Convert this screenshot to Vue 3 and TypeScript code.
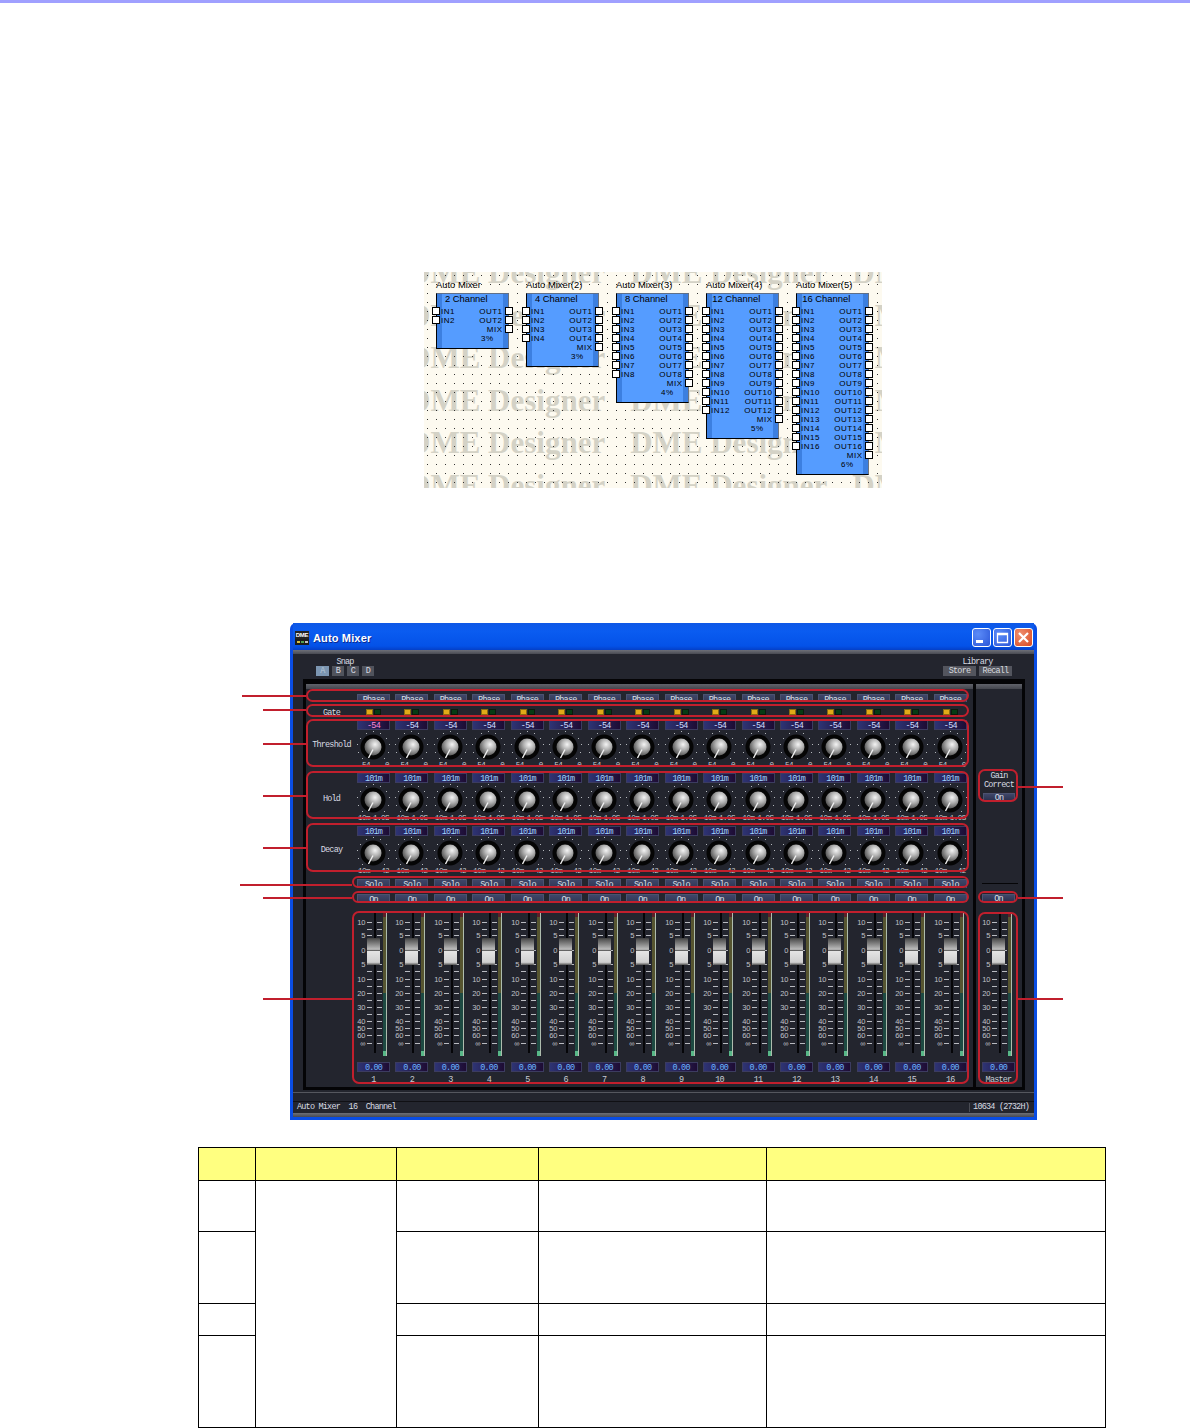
<template>
  <div class="page">
    <div class="topbar" />

    <section class="canvas">
      <svg class="dots" width="458" height="216">
        <defs>
          <pattern id="dotgrid" x="3" y="3" width="9" height="9" patternUnits="userSpaceOnUse">
            <rect width="1" height="1" fill="#333" />
          </pattern>
        </defs>
        <rect width="458" height="216" fill="url(#dotgrid)" />
      </svg>
      <div class="watermark">
        <div v-for="r in 6" :key="r" class="wm-row">
          <span>DME Designer</span><span>DME Designer</span><span>DME Designer</span>
        </div>
      </div>
      <div class="blocks">
        <div v-for="b in blocks" :key="b.name" class="block-wrap">
          <div class="block-name">{{ b.name }}</div>
          <div class="block">
            <div class="block-title">{{ b.channels }} Channel</div>
            <div v-for="i in b.channels" :key="i" class="port-row">
              <i class="port port--in" />
              <span class="port-in">IN{{ i }}</span>
              <span class="port-out">OUT{{ i }}</span>
              <i class="port port--out" />
            </div>
            <div class="port-row">
              <span class="port-out">MIX</span>
              <i class="port port--out" />
            </div>
            <div class="port-row port-row--load">{{ b.load }}</div>
          </div>
        </div>
      </div>
    </section>

    <div class="mixer-wrap">
      <div class="win">
        <div class="titlebar">
          <div class="app-icon">
            <span>DME</span>
            <svg width="14" height="6">
              <rect width="14" height="6" fill="#1c1c1c" />
              <rect x="2" y="2" width="3" height="2" fill="#d8c040" />
              <rect x="6" y="2" width="3" height="2" fill="#50a050" />
              <rect x="10" y="2" width="3" height="2" fill="#c0c0c0" />
            </svg>
          </div>
          <span class="win-title">Auto Mixer</span>
          <div class="win-btns">
            <button class="win-btn">
              <svg width="17" height="17"><rect x="3" y="11" width="7" height="3" fill="#fff" /></svg>
            </button>
            <button class="win-btn">
              <svg width="17" height="17"><path d="M3.5 4.5h10v9h-10zM3.5 5.5h10" fill="none" stroke="#fff" stroke-width="1.3" /></svg>
            </button>
            <button class="win-btn win-btn--close">
              <svg width="17" height="17"><path d="M4 4l9 9M13 4l-9 9" stroke="#fff" stroke-width="2.2" /></svg>
            </button>
          </div>
        </div>

        <div class="win-body">
          <div class="grey-strip" />
          <div class="win-head">
            <div class="snap">
              <div class="head-label">Snap</div>
              <div class="snap-btns">
                <span v-for="s in ['A', 'B', 'C', 'D']" :key="s" class="snap-btn" :class="{ 'snap-btn--on': s === 'A' }">{{ s }}</span>
              </div>
            </div>
            <div class="library">
              <div class="head-label">Library</div>
              <div class="lib-btns">
                <span class="lib-btn">Store</span>
                <span class="lib-btn">Recall</span>
              </div>
            </div>
          </div>

          <div class="panel">
            <div class="main-panel">
              <div class="panel-strip" />

              <div class="row row--phase">
                <span class="row-label" />
                <div class="strips">
                  <span v-for="n in 16" :key="n" class="btn btn--clip">Phase</span>
                </div>
              </div>

              <div class="row row--gate">
                <span class="row-label">Gate</span>
                <div class="strips">
                  <div v-for="n in 16" :key="n" class="leds"><i class="led led--y" /><i class="led led--g" /></div>
                </div>
              </div>

              <div v-for="k in knobRows" :key="k.label" class="row row--knob">
                <span class="row-label row-label--knob" :style="{ paddingTop: k.labelTop + 'px' }">{{ k.label }}</span>
                <div class="strips">
                  <div v-for="n in 16" :key="n" class="knob-cell">
                    <div class="val" :class="{ 'val--pink': k.pink && n === 1, 'val--pale': k.pink && n > 1 }">{{ k.value }}</div>
                    <svg class="knob" width="33" height="34" viewBox="0 0 33 34">
                      <rect v-for="(d, i) in knobDots" :key="i" :x="d.x" :y="d.y" width="1" height="1" fill="#b4b8bc" />
                      <circle cx="16" cy="17" r="12.5" fill="#050505" />
                      <circle cx="16" cy="17" r="8.5" fill="url(#ball)" />
                      <path d="M16 19.5L11.5 28" stroke="#f0f0f0" stroke-width="1.4" />
                    </svg>
                    <div class="range"><span>{{ k.min }}</span><span>{{ k.max }}</span></div>
                  </div>
                </div>
              </div>

              <div class="row row--solo">
                <span class="row-label" />
                <div class="strips">
                  <span v-for="n in 16" :key="n" class="btn btn--solo">Solo</span>
                </div>
              </div>

              <div class="row row--on">
                <span class="row-label" />
                <div class="strips">
                  <span v-for="n in 16" :key="n" class="btn btn--clip">On</span>
                </div>
              </div>

              <div class="row row--fader">
                <span class="row-label" />
                <div class="strips">
                  <div v-for="n in 16" :key="n" class="fader-cell">
                    <svg class="fader" width="33" height="143" viewBox="0 0 33 143">
                      <rect x="17" y="0" width="2" height="140" fill="#050508" />
                      <g v-for="t in ticks" :key="t.y">
                        <text x="8.5" :y="t.y + 2.5" text-anchor="end" class="tick-text">{{ t.label }}</text>
                        <rect x="10" :y="t.y" width="5" height="1" fill="#b8bac0" />
                        <rect x="20" :y="t.y" width="5" height="1" fill="#b8bac0" />
                      </g>
                      <rect x="26" y="0" width="3" height="4" fill="#5a2028" />
                      <rect x="26" y="4" width="3" height="76" fill="#565530" />
                      <rect x="26" y="80" width="3" height="58" fill="#1d4a42" />
                      <rect x="26" y="138" width="3" height="5" fill="#58b888" />
                      <rect x="29" y="0" width="1" height="143" fill="#aebcae" />
                      <rect x="10" y="25" width="13" height="27" rx="1" fill="url(#cap)" />
                    </svg>
                    <div class="val val--fader">0.00</div>
                    <div class="strip-no">{{ n }}</div>
                  </div>
                </div>
              </div>
            </div>

            <div class="master">
              <div class="panel-strip" />
              <div class="gain">
                <div class="gain-label">Gain</div>
                <div class="gain-label">Correct</div>
                <span class="btn btn--gain">On</span>
              </div>
              <div class="master-line" />
              <span class="btn btn--master-on">On</span>
              <div class="fader-cell fader-cell--master">
                <svg class="fader" width="33" height="143" viewBox="0 0 33 143">
                  <rect x="17" y="0" width="2" height="140" fill="#050508" />
                  <g v-for="t in ticks" :key="t.y">
                    <text x="8.5" :y="t.y + 2.5" text-anchor="end" class="tick-text">{{ t.label }}</text>
                    <rect x="10" :y="t.y" width="5" height="1" fill="#b8bac0" />
                    <rect x="20" :y="t.y" width="5" height="1" fill="#b8bac0" />
                  </g>
                  <rect x="26" y="0" width="3" height="4" fill="#5a2028" />
                  <rect x="26" y="4" width="3" height="76" fill="#565530" />
                  <rect x="26" y="80" width="3" height="58" fill="#1d4a42" />
                  <rect x="26" y="138" width="3" height="5" fill="#58b888" />
                  <rect x="29" y="0" width="1" height="143" fill="#aebcae" />
                  <rect x="10" y="25" width="13" height="27" rx="1" fill="url(#cap)" />
                </svg>
                <div class="val val--fader">0.00</div>
                <div class="strip-no">Master</div>
              </div>
            </div>
          </div>

          <div class="under-line" />
          <div class="statusbar">
            <span class="status-left">{{ statusText }}</span>
            <span class="status-right">10634 (2732H)</span>
          </div>
          <div class="grey-strip grey-strip--bottom" />
        </div>
      </div>

      <!-- red annotations sit over the screenshot -->
      <div v-for="(b, i) in redBoxes" :key="'b' + i" class="red-box" :style="boxStyle(b)" />
      <div v-for="(l, i) in redLines" :key="'l' + i" class="red-line" :style="lineStyle(l)" />
    </div>

    <table class="spec">
      <colgroup>
        <col style="width: 57px" /><col style="width: 141px" /><col style="width: 142px" /><col style="width: 228px" /><col style="width: 339px" />
      </colgroup>
      <tbody>
        <tr class="spec-head"><td /><td /><td /><td /><td /></tr>
        <tr class="r1"><td /><td rowspan="4" /><td /><td /><td /></tr>
        <tr class="r2"><td /><td /><td /><td /></tr>
        <tr class="r3"><td /><td /><td /><td /></tr>
        <tr class="r4"><td /><td /><td /><td /></tr>
      </tbody>
    </table>

    <svg class="defs" width="0" height="0">
      <defs>
        <radialGradient id="ball" cx="0.62" cy="0.35" r="0.75">
          <stop offset="0" stop-color="#f4f4f4" />
          <stop offset="0.4" stop-color="#b4b4b4" />
          <stop offset="0.85" stop-color="#5c5c5c" />
          <stop offset="1" stop-color="#343434" />
        </radialGradient>
        <linearGradient id="cap" x1="0" y1="0" x2="0" y2="1">
          <stop offset="0" stop-color="#3e3e3e" />
          <stop offset="0.08" stop-color="#5c5c5c" />
          <stop offset="0.42" stop-color="#bdbdbd" />
          <stop offset="0.46" stop-color="#5a5a5a" />
          <stop offset="0.5" stop-color="#e4e4e4" />
          <stop offset="0.9" stop-color="#cfcfcf" />
          <stop offset="1" stop-color="#505050" />
        </linearGradient>
      </defs>
    </svg>
  </div>
</template>

<script setup lang="ts">
type Box = [number, number, number, number];

const WRAP_TOP = 623;
const statusText = 'Auto Mixer  16  Channel';

const blocks = [
  { name: 'Auto Mixer', channels: 2, load: '3%' },
  { name: 'Auto Mixer(2)', channels: 4, load: '3%' },
  { name: 'Auto Mixer(3)', channels: 8, load: '4%' },
  { name: 'Auto Mixer(4)', channels: 12, load: '5%' },
  { name: 'Auto Mixer(5)', channels: 16, load: '6%' },
];

const knobRows = [
  { label: 'Threshold', value: '-54', min: '-54', max: '0', pink: true, labelTop: 21 },
  { label: 'Hold', value: '101m', min: '10m', max: '1.0S', pink: false, labelTop: 22 },
  { label: 'Decay', value: '101m', min: '10m', max: '42', pink: false, labelTop: 20 },
];

// dots round each knob, 11 steps over 270 degrees
const knobDots = Array.from({ length: 11 }, (_, i) => {
  const a = ((135 + i * 27) * Math.PI) / 180;
  return { x: Math.round(16 + Math.cos(a) * 16), y: Math.round(17 + Math.sin(a) * 16) };
});

const ticks = [
  { y: 9, label: '10' },
  { y: 16, label: '' },
  { y: 22, label: '5' },
  { y: 37, label: '0' },
  { y: 51, label: '5' },
  { y: 58, label: '' },
  { y: 66, label: '10' },
  { y: 73, label: '' },
  { y: 80, label: '20' },
  { y: 87, label: '' },
  { y: 94, label: '30' },
  { y: 101, label: '' },
  { y: 108, label: '40' },
  { y: 115, label: '50' },
  { y: 122, label: '60' },
  { y: 130, label: '∞' },
];

const redBoxes: Box[] = [
  [306, 689, 663, 13],
  [306, 704, 663, 13],
  [306, 719, 663, 48],
  [306, 771, 663, 48],
  [306, 823, 663, 49],
  [352, 876, 617, 12],
  [352, 891, 617, 12],
  [352, 911, 617, 173],
  [978, 769, 40, 33],
  [978, 891, 40, 12],
  [978, 912, 40, 172],
];

const redLines: Box[] = [
  [242, 695, 64, 1],
  [263, 709, 43, 1],
  [263, 743, 43, 1],
  [263, 795, 43, 1],
  [263, 847, 43, 1],
  [240, 884, 112, 1],
  [263, 897, 89, 1],
  [263, 998, 89, 1],
  [1018, 786, 45, 1],
  [1018, 897, 45, 1],
  [1018, 998, 45, 1],
];

const boxStyle = (b: Box) => ({
  left: b[0] + 'px',
  top: b[1] - WRAP_TOP + 'px',
  width: b[2] + 'px',
  height: b[3] + 'px',
});

const lineStyle = (l: Box) => ({
  left: l[0] + 'px',
  top: l[1] - WRAP_TOP + 'px',
  width: l[2] + 'px',
});
</script>

<style>
html, body { margin: 0; background: #fff; }
</style>

<style scoped>
.page { width: 1190px; height: 1428px; overflow: hidden; background: #fff; font-family: "Liberation Sans", Arial, sans-serif; }
.topbar { height: 3px; background: #a0a0ff; }

/* block diagram */
.canvas { position: relative; width: 458px; height: 216px; margin: 269px 0 0 424px; background: #fdfaf0; overflow: hidden; }
.dots { position: absolute; left: 0; top: 0; z-index: 1; }
.watermark { position: absolute; left: -16px; top: -20px; color: #d4d2c6; font: bold 31px/42.5px "Liberation Serif", serif; white-space: nowrap; }
.wm-row { display: flex; gap: 25px; }
.blocks { position: relative; z-index: 2; display: flex; align-items: flex-start; gap: 18px; padding: 7px 0 0 12px; }
.block-wrap { width: 72px; }
.block-name { height: 14px; font-size: 9.4px; line-height: 11px; white-space: nowrap; color: #000; }
.block {
  box-sizing: border-box; width: 72.5px; padding-bottom: 5px; color: #000; font-size: 8px;
  border: 1px solid #000; border-top-color: #5f6f88; border-right-color: #6d7480;
  background: linear-gradient(90deg, #3c7fe0 0, #3c7fe0 5px, #559cff 5px, #559cff calc(100% - 5px), #3c7fe0 calc(100% - 5px));
}
.block-title { height: 12.5px; padding-right: 12px; font-size: 9.4px; line-height: 9px; text-align: center; white-space: nowrap; }
.port-row { display: flex; align-items: center; height: 9px; letter-spacing: 0.5px; white-space: nowrap; }
.port-row--load { justify-content: flex-end; padding-right: 14px; }
.port { box-sizing: border-box; flex: none; width: 8px; height: 8px; border: 1px solid #000; background: #fff; }
.port--in { margin-left: -5px; }
.port--out { margin-right: -5px; margin-left: 2px; }
.port-in { margin-left: 1px; }
.port-out { margin-left: auto; }

/* mixer window */
.mixer-wrap { position: relative; margin-top: 135px; }
.win { box-sizing: border-box; display: flex; flex-direction: column; width: 747px; height: 497px; margin-left: 290px; padding: 0 3px 3px; border-radius: 6px 6px 0 0; background: #0a4de4; }
.titlebar { display: flex; align-items: center; height: 27px; flex: none; padding-left: 2px; background: linear-gradient(#0e58e6, #0a5cf0 30%, #0452e8 85%, #0440c8); }
.app-icon { display: flex; flex-direction: column; width: 14px; height: 14px; margin-top: 2px; background: #222; overflow: hidden; }
.app-icon span { height: 8px; color: #fff; font: bold 6px/8px "Liberation Sans", sans-serif; text-align: center; letter-spacing: -0.3px; }
.win-title { margin: 2px 0 0 4px; color: #fff; font: bold 11px "Liberation Sans", sans-serif; letter-spacing: 0.15px; text-shadow: 1px 1px #0a2a90; }
.win-btns { display: flex; gap: 2px; margin: 2px 1px 0 auto; }
.win-btn { display: flex; align-items: center; justify-content: center; box-sizing: border-box; width: 19px; height: 19px; padding: 0; border: 1px solid #fff; border-radius: 3px; background: radial-gradient(circle at 30% 30%, #5c8cf8, #2a56d8); }
.win-btn--close { background: radial-gradient(circle at 30% 30%, #f09070, #d84820); }

.win-body { flex: 1; display: flex; flex-direction: column; background: #23252e; color: #d8dbe2; font: 8.5px/9px "Liberation Mono", monospace; letter-spacing: -0.8px; }
.grey-strip { height: 4px; flex: none; background: linear-gradient(#6e7078, #484a52); }
.win-head { display: flex; justify-content: space-between; height: 25px; flex: none; padding: 0 22px 0 23px; }
.head-label { height: 12px; padding-top: 3px; text-align: center; box-sizing: border-box; line-height: 11px; }
.snap { width: 58px; }
.snap-btns { display: flex; justify-content: space-between; }
.snap-btn { width: 12px; height: 10px; background: #50535c; text-align: center; line-height: 11px; }
.snap-btn--on { width: 13px; background: #7c96b2; color: #b8c8d8; }
.library { width: 69px; }
.lib-btns { display: flex; justify-content: space-between; }
.lib-btn { width: 33px; height: 10px; background: #53555e; color: #d8dade; text-align: center; line-height: 11px; }

.panel { display: flex; gap: 3px; height: 411px; flex: none; box-sizing: border-box; margin: 0 9px 0 10px; padding: 5px 3px 3px; background: #040406; }
.main-panel { width: 667px; background: #23252e; }
.panel-strip { height: 5px; background: linear-gradient(#60626a, #44464e); }

.row { display: flex; }
.row-label { flex: none; width: 51px; text-align: center; white-space: nowrap; }
.strips { display: flex; justify-content: space-between; width: 610px; }
.row--phase { height: 8px; margin-top: 5px; overflow: hidden; }
.row--gate { height: 6px; margin-top: 7px; }
.row--gate .row-label { line-height: 8px; }
.row--knob { height: 53px; }
.row--gate + .row--knob { margin-top: 5px; }
.row--solo { height: 9px; overflow: hidden; }
.row--on { height: 8px; margin-top: 6px; overflow: hidden; }
.row--fader { margin-top: 11px; }

.btn { box-sizing: border-box; flex: none; display: block; width: 33px; height: 12px; border: 1px solid #4c5270; border-bottom-color: #101018; background: linear-gradient(#3e4668, #2c3250); color: #dde0e8; text-align: center; line-height: 11px; }
.btn--solo { line-height: 10px; }
.leds { display: flex; justify-content: center; gap: 1px; width: 33px; }
.led { box-sizing: border-box; width: 7px; height: 6px; }
.led--y { background: #e0aa18; border: 1px solid #8a6a10; }
.led--g { background: #063c14; border: 1px solid #0c1a0c; }

.knob-cell { width: 33px; }
.val { box-sizing: border-box; height: 10px; border: 1px solid #3c3c60; background: linear-gradient(90deg, #2e3474, #1e0c34); color: #a0d4ff; text-align: center; line-height: 10px; white-space: nowrap; }
.val--pink { color: #ff88d8; }
.val--pale { color: #cfdcff; }
.knob { display: block; }
.range { display: flex; justify-content: space-between; height: 8px; margin-top: -3px; padding: 0 1px; color: #ccd0d8; line-height: 8px; font-size: 7.5px; letter-spacing: -0.5px; }

.fader-cell { width: 33px; }
.fader { display: block; overflow: visible; }
.tick-text { fill: #c0c2c8; font: 7.5px "Liberation Sans", sans-serif; letter-spacing: 0; }
.val--fader { margin-top: 6px; color: #6cb4ff; }
.strip-no { height: 10px; margin-top: 3px; text-align: center; color: #c8ccd4; line-height: 10px; white-space: nowrap; }

.master { display: flex; flex-direction: column; width: 46px; background: #23252e; }
.gain { display: flex; flex-direction: column; align-items: center; margin-top: 83px; }
.gain-label { height: 9px; }
.btn--gain { width: 32px; height: 8px; margin-top: 3px; line-height: 8px; overflow: hidden; }
.master-line { height: 1px; margin: auto 4px 0 6px; background: #050507; }
.btn--master-on { width: 33px; height: 8px; margin: 10px 0 0 6px; overflow: hidden; line-height: 8px; }
.fader-cell--master { margin: 11px 0 2px 6px; }

.under-line { height: 1px; margin-top: 2px; flex: none; background: #55575f; }
.statusbar { display: flex; align-items: center; height: 12px; flex: none; margin-top: 8px; padding-left: 4px; border-top: 1px solid #101014; box-sizing: border-box; white-space: pre; }
.status-right { margin-left: auto; padding: 0 5px 0 3px; border-left: 1px solid #4a4c54; }
.status-left { width: 675px; }
.grey-strip--bottom { flex: 1; height: auto; margin-top: 0; }

/* annotations */
.red-box { position: absolute; box-sizing: border-box; border: 2px solid #c11f2d; border-radius: 7px; }
.red-line { position: absolute; height: 2px; background: #c11f2d; }

/* table */
.spec { table-layout: fixed; width: 907px; margin: 27px 0 0 198px; border-collapse: collapse; }
.spec td { padding: 0; border: 1px solid #000; }
.spec-head td { height: 32px; background: #ffff80; }
.r1 td { height: 50px; }
.r2 td { height: 71px; }
.r3 td { height: 31px; }
.r4 td { height: 91px; }

.defs { position: absolute; width: 0; height: 0; }
</style>
